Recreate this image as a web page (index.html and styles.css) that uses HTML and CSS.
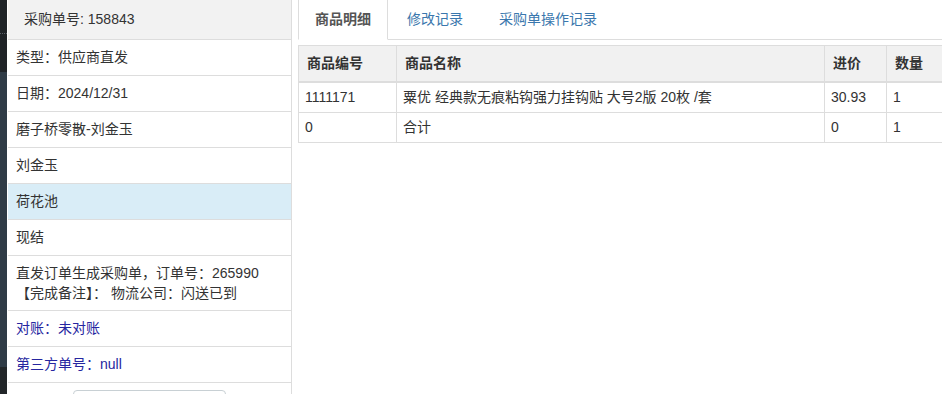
FILE: index.html
```html
<!DOCTYPE html>
<html lang="zh-CN">
	<head>
		<meta charset="UTF-8" />
		<meta name="viewport" content="width=device-width, initial-scale=1.0" />
		<title>采购单详情</title>
		<link rel="stylesheet" href="styles.css">
	</head>
	<body>
		<div class="page">
			<div class="strip">
				<div class="strip-top"><span class="dots"></span></div>
				<div class="strip-mid"></div>
				<div class="strip-bottom"></div>
			</div>

			<div class="side">
				<div class="side-head">采购单号: 158843</div>
				<ul class="info-list">
					<li>类型：供应商直发</li>
					<li>日期：2024/12/31</li>
					<li>磨子桥零散-刘金玉</li>
					<li>刘金玉</li>
					<li class="active">荷花池</li>
					<li>现结</li>
					<li class="remark">直发订单生成采购单，订单号：265990<br />【完成备注】： 物流公司：闪送已到</li>
					<li><a href="javascript:;">对账：未对账</a></li>
					<li><a href="javascript:;">第三方单号：null</a></li>
				</ul>
				<div class="side-btn"><a href="javascript:;" class="btn"></a></div>
			</div>

			<div class="main">
				<ul class="tabs">
					<li class="current"><a href="javascript:;">商品明细</a></li>
					<li><a href="javascript:;">修改记录</a></li>
					<li><a href="javascript:;">采购单操作记录</a></li>
				</ul>

				<table class="goods">
					<thead>
						<tr>
							<th class="col-code">商品编号</th>
							<th class="col-name">商品名称</th>
							<th class="col-price">进价</th>
							<th class="col-qty">数量</th>
						</tr>
					</thead>
					<tbody>
						<tr>
							<td>1111171</td>
							<td>粟优 经典款无痕粘钩强力挂钩贴 大号2版 20枚 /套</td>
							<td>30.93</td>
							<td>1</td>
						</tr>
						<tr>
							<td>0</td>
							<td>合计</td>
							<td>0</td>
							<td>1</td>
						</tr>
					</tbody>
				</table>
			</div>
		</div>
	</body>
</html>
```

FILE: styles.css
```css
* {
	margin: 0;
	padding: 0;
	box-sizing: border-box;
}

body {
	font-family: "Liberation Sans", "Noto Sans CJK SC", sans-serif;
	font-size: 14px;
	line-height: 20px;
	color: #333;
	background-color: #fff;
	overflow: hidden;
}

a {
	text-decoration: none;
}

ul {
	list-style-type: none;
}

.page {
	display: flex;
	width: 960px;
	height: 394px;
	overflow: hidden;
}

/* 左侧深色边栏 */
.strip {
	width: 7px;
	display: flex;
	flex-direction: column;
}

.strip-top {
	height: 72px;
	background-color: #1f2327;
	padding-top: 33px;
}

.strip-top .dots {
	display: block;
	height: 1px;
	border-top: 1px dotted #5a6068;
}

.strip-mid {
	height: 295px;
	background-color: #2f3b46;
}

.strip-bottom {
	flex: 1;
	background-color: #222629;
}

/* 采购单信息 */
.side {
	width: 285px;
	padding-left: 1px;
	border-right: 1px solid #ddd;
	overflow: hidden;
}

.side-head {
	height: 40px;
	padding: 9px 16px 10px;
	background-color: #f2f2f2;
	border-bottom: 1px solid #ddd;
}

.info-list li {
	padding: 7px 8px 8px;
	border-bottom: 1px solid #ddd;
}

.info-list li.remark {
	padding-bottom: 7px;
}

.info-list li.active {
	background-color: #d9edf7;
}

.info-list a {
	color: #2626a0;
}

.side-btn {
	display: flex;
	justify-content: center;
	padding-top: 7px;
}

.side-btn .btn {
	display: block;
	width: 153px;
	height: 34px;
	border: 1px solid #c8d0d4;
	border-radius: 4px;
}

/* 右侧 */
.main {
	flex: 1;
	padding-left: 6px;
}

.tabs {
	display: flex;
	border-bottom: 1px solid #ddd;
}

.tabs li {
	margin-bottom: -1px;
	margin-right: 2px;
}

.tabs a {
	display: block;
	padding: 9px 16px 10px;
	border: 1px solid transparent;
	border-top: 0;
	color: #3a77ad;
}

.tabs .current a {
	color: #555;
	font-weight: bold;
	background-color: #fff;
	border-color: #ddd;
	border-bottom-color: #fff;
}

.goods {
	margin-top: 5px;
	width: 660px;
	border-collapse: collapse;
	border: 1px solid #ddd;
}

.goods th,
.goods td {
	text-align: left;
	border: 1px solid #ddd;
	padding: 4px 6px 5px;
}

.goods th {
	padding: 7px 8px 8px;
	background-color: #f1f1f1;
	border-bottom-width: 2px;
	font-weight: bold;
}

.col-code {
	width: 98px;
}

.col-name {
	width: 428px;
}

.col-price {
	width: 62px;
}
```
